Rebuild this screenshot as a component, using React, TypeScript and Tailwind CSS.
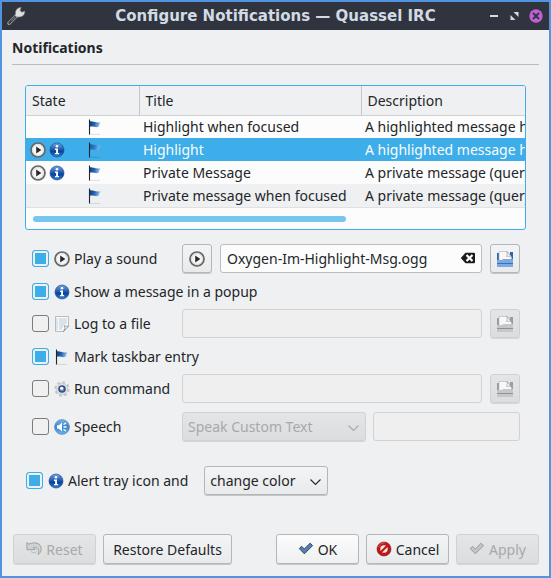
import React, { useState } from "react";
import type { ReactNode } from "react";

function PlayIcon() {
  return (
    <svg className="size-4 shrink-0" viewBox="0 0 16 16" aria-hidden="true">
      <circle cx="8" cy="8" r="7" fill="#f8f8f8" stroke="#666" strokeWidth="1.7" />
      <circle cx="8" cy="8" r="5.4" fill="none" stroke="#d4d4d4" strokeWidth="0.8" />
      <path d="M6.200 4.500 11.400 8 6.200 11.500Z" fill="#2a2a2a" />
    </svg>
  );
}

function InfoIcon() {
  return (
    <svg className="size-4 shrink-0" viewBox="0 0 16 16" aria-hidden="true">
      <defs>
        <linearGradient id="info-fill" x1="0" y1="0" x2="0" y2="1">
          <stop offset="0" stopColor="#7aa3da" />
          <stop offset="0.45" stopColor="#1f5cb2" />
          <stop offset="0.6" stopColor="#0b4199" />
          <stop offset="1" stopColor="#2f86e0" />
        </linearGradient>
      </defs>
      <circle cx="8" cy="8" r="7" fill="url(#info-fill)" stroke="#123f86" strokeWidth="0.6" />
      <circle cx="8" cy="4.3" r="1.3" fill="#fff" />
      <path d="M6 6.600h3v4.300h1.100v1.300H6v-1.300h1.100V7.900H6Z" fill="#fff" />
    </svg>
  );
}

function FlagIcon({ faded = false }: { faded?: boolean }) {
  return (
    <svg className="size-4 shrink-0" viewBox="0 0 16 16" aria-hidden="true">
      <defs>
        <linearGradient id="flag-fill" x1="0" y1="0" x2="1" y2="0.2">
          <stop offset="0" stopColor="#0c3a78" />
          <stop offset="0.5" stopColor="#2565b4" />
          <stop offset="1" stopColor="#9cc4ee" />
        </linearGradient>
      </defs>
      <path d="M3 15.400h10" stroke="#000" strokeOpacity="0.15" strokeWidth="0.8" />
      <path d="M2.500.500v15" stroke="#20262e" strokeWidth="1.100" />
      <path
        d="M3 2.200C6 1.800 7.500 4 13.600 3.200 12.500 5 12.200 5.500 11.800 7.800 8 9 6.500 7 3 7.800Z"
        fill="url(#flag-fill)"
        opacity={faded ? 0.7 : 1}
      />
    </svg>
  );
}

function LogIcon() {
  return (
    <svg className="size-4 shrink-0" viewBox="0 0 16 16" aria-hidden="true">
      <path d="M1.500.500h13v9.500l-5 5.500h-8Z" fill="#fafafa" stroke="#a9adb0" strokeWidth="0.8" />
      <path d="M5 3h8M5 5h8M5 7h8M5 9h6M5 11h4M5 13h3" stroke="#a8c0cf" strokeWidth="0.8" />
      <path d="M3 2.600v11" stroke="#8ea4b2" strokeWidth="1" strokeDasharray="1 1" />
      <path d="M14.500 10c-1.500.500-2.500.200-3.800-.300.300 2-.200 3.800-1.200 5.800Z" fill="#fff" stroke="#858585" strokeWidth="0.8" />
    </svg>
  );
}

function GearIcon() {
  return (
    <svg className="size-4 shrink-0" viewBox="0 0 16 16" aria-hidden="true">
      <circle cx="8" cy="8" r="6.600" fill="none" stroke="#c3c5c7" strokeWidth="2.200" strokeDasharray="2.900 2.280" />
      <circle cx="8" cy="8" r="5.600" fill="#dfe0e2" stroke="#c6c8ca" strokeWidth="0.8" />
      <circle cx="8" cy="8" r="3" fill="#6f8bbd" stroke="#34508a" strokeWidth="1.600" />
      <circle cx="7.600" cy="7.300" r="1.500" fill="#fff" />
    </svg>
  );
}

function SpeechIcon() {
  return (
    <svg className="size-4 shrink-0" viewBox="0 0 16 16" aria-hidden="true">
      <defs>
        <linearGradient id="speech-fill" x1="0" y1="0" x2="0" y2="1">
          <stop offset="0" stopColor="#79b3e6" />
          <stop offset="0.5" stopColor="#3b83cb" />
          <stop offset="1" stopColor="#6fb4ec" />
        </linearGradient>
      </defs>
      <circle cx="8" cy="8" r="7.500" fill="url(#speech-fill)" stroke="#4a8ac8" strokeWidth="0.6" />
      <path d="M3 6.200h2l3-2.800v9.200L5 9.800H3Z" fill="#fff" />
      <path d="M9.500 5.500 12 4.200M9.500 8h3M9.500 10.500 12 11.800" stroke="#fff" strokeWidth="1.300" />
    </svg>
  );
}

function OpenIcon({ disabled = false }: { disabled?: boolean }) {
  const back = disabled ? "#9b9c9d" : "#2f66ab";
  const front = disabled ? "#c6c7c8" : "#7ba9e3";
  const line = disabled ? "#919293" : "#3d70b5";
  return (
    <svg className="size-4 shrink-0" viewBox="0 0 16 16" aria-hidden="true">
      <path d="M0 2h2v7H0ZM13 1h3v9h-3Z" fill={back} />
      <path d="M2 .500h8L14.500 6v4H2Z" fill="#f8f8f8" stroke="#b0b0b0" strokeWidth="0.6" />
      <path d="M10 .500 14.500 6C13 5.200 11.500 5 9.500 5.300 10.300 4 10.400 2.500 10 .500Z" fill="#fff" stroke="#8a8a8a" strokeWidth="0.6" />
      <path d="M0 9h4.500L6.500 8H16v8H0Z" fill={front} />
      <path d="M0 12.500h16" stroke={line} strokeWidth="1" />
    </svg>
  );
}

function CheckIcon({ disabled = false }: { disabled?: boolean }) {
  return (
    <svg className="size-4 shrink-0" viewBox="0 0 16 16" aria-hidden="true">
      <path
        d="M1.300 7.600 3.600 5.300 6.300 8 12.200 2.200 14.600 4.600 6.400 12.800Z"
        fill={disabled ? "#c3c4c5" : "#5580b3"}
        stroke={disabled ? "#98999a" : "#2f4259"}
        strokeWidth="1"
        strokeLinejoin="round"
      />
    </svg>
  );
}

function CancelIcon() {
  return (
    <svg className="size-4 shrink-0" viewBox="0 0 16 16" aria-hidden="true">
      <circle cx="8" cy="8" r="7" fill="#c01818" stroke="#7d1010" strokeWidth="0.6" />
      <circle cx="8" cy="8" r="3.700" fill="#efe9e9" />
      <path d="m4.500 11.500 7-7" stroke="#c01818" strokeWidth="2.200" />
      <path d="M2.500 6C3.500 3 6 1.800 8.500 1.900" fill="none" stroke="#e67070" strokeWidth="0.8" />
    </svg>
  );
}

function UndoIcon() {
  return (
    <svg className="size-4 shrink-0" viewBox="0 0 16 16" aria-hidden="true">
      <path
        d="M.800 1.500 3 3.200C8 .500 15.500 2 15.200 8c0 3-1.700 4.800-3.200 5.400C14 9 11.500 6.200 7.200 6.300l2 2.400H1Z"
        fill="#d0d1d2"
        stroke="#a0a1a3"
        strokeWidth="1"
        strokeLinejoin="round"
      />
      <path d="M5 10.500c2 2 5 1.500 6-.500" fill="none" stroke="#b4b5b7" strokeWidth="1" />
    </svg>
  );
}

function ClearIcon() {
  return (
    <svg className="h-3 w-4" viewBox="0 0 16 12" aria-hidden="true">
      <path d="M.800 6 5.500.800H14a1 1 0 0 1 1 1v8.400a1 1 0 0 1-1 1H5.500Z" fill="#1c1c1c" />
      <path d="m6.500 3 6 6m0-6-6 6" stroke="#fff" strokeWidth="2.200" />
    </svg>
  );
}

function WrenchIcon() {
  return (
    <svg className="h-5 w-5" viewBox="0 0 20 20" aria-hidden="true">
      <path d="M3 17.200 11 9.200" stroke="#9c9b95" strokeWidth="3.600" strokeLinecap="round" />
      <path d="M3.300 16.900 10.500 9.700" stroke="#2f343f" strokeWidth="2" strokeLinecap="round" />
      <path d="M5.500 14.700 9.500 10.700" stroke="#8d8c87" strokeWidth="0.8" />
      <path
        d="M9.500 8.200C9 4 11.500 1.500 15.300 1.500L14 4.300l1.800 2 3-1.300c.4 3.400-2.300 6.300-6.300 6L11 11.200 8.800 9.400Z"
        fill="#dfdfdb"
        stroke="#77776f"
        strokeWidth="0.6"
      />
    </svg>
  );
}

function Chevron() {
  return (
    <svg className="pointer-events-none absolute top-3 right-1.5 h-1.5 w-[11px]" viewBox="0 0 11 6" aria-hidden="true">
      <path d="m.500.500 5 5 5-5" fill="none" stroke="currentColor" strokeWidth="1.100" />
    </svg>
  );
}

function Checkbox({ id, initial }: { id: string; initial: boolean }) {
  const [checked, setChecked] = useState(initial);
  return (
    <input
      id={id}
      type="checkbox"
      checked={checked}
      onChange={(e) => setChecked(e.target.checked)}
      className="size-[17px] shrink-0 appearance-none rounded-[3px] border border-[#7a7c7e] bg-[#f0f0f1] checked:border-[#3daee9] checked:bg-[#3daee9] checked:shadow-[inset_0_0_0_2px_#eff0f1]"
    />
  );
}

function Option({ id, initial, icon, text, className = "" }: { id: string; initial: boolean; icon: ReactNode; text: string; className?: string }) {
  return (
    <div className={`flex items-center gap-[5px] ${className}`}>
      <Checkbox id={id} initial={initial} />
      <label htmlFor={id} className="flex items-center gap-1 whitespace-nowrap">
        {icon}
        {text}
      </label>
    </div>
  );
}

const enabledBox = "border-[#b4b7b9] bg-linear-to-b from-[#f3f4f5] to-[#e9eaeb] shadow-[0_1px_0_#c4c6c8]";
const disabledBox = "border-[#cfd1d3] bg-linear-to-b from-[#e4e5e6] to-[#dcddde] text-[#a7a9ab] shadow-[0_1px_0_#d3d5d7]";
const field = "h-[29px] w-full min-w-0 rounded-[3px] border px-1.5 outline-none";

function SquareButton({ label, disabled = false, children }: { label: string; disabled?: boolean; children: ReactNode }) {
  return (
    <button
      aria-label={label}
      disabled={disabled}
      className={`flex h-[29px] w-[30px] shrink-0 items-center justify-center rounded-[3px] border ${disabled ? disabledBox : enabledBox}`}
    >
      {children}
    </button>
  );
}

function DialogButton({ disabled = false, wide = false, bright = false, icon, children }: { disabled?: boolean; wide?: boolean; bright?: boolean; icon?: ReactNode; children: ReactNode }) {
  const look = disabled
    ? disabledBox
    : bright
      ? "border-[#b4b7b9] bg-linear-to-b from-[#fcfcfc] to-[#eff0f1] shadow-[0_1px_0_#c4c6c8]"
      : enabledBox;
  return (
    <button
      disabled={disabled}
      className={`flex h-[30px] items-center justify-center gap-1 rounded-[3px] border whitespace-nowrap ${wide ? "w-[129px]" : "w-[83px]"} ${look}`}
    >
      {icon}
      {children}
    </button>
  );
}

const rows = [
  { title: "Highlight when focused", text: "A highlighted message has been received", alerts: false },
  { title: "Highlight", text: "A highlighted message has been received", alerts: true },
  { title: "Private Message", text: "A private message (query) has been received", alerts: true },
  { title: "Private message when focused", text: "A private message (query) has been received", alerts: false },
];

function NotificationTable() {
  const [selected, setSelected] = useState(1);
  return (
    <div className="overflow-hidden rounded-[3px] border border-[#3daee9] bg-[#fcfcfc]">
      <div className="overflow-hidden border-b border-[#dfe1e2]">
        <table className="w-[840px] table-fixed border-collapse text-left">
          <thead className="bg-[#eff0f1]">
            <tr className="h-[29px] border-b border-[#d0d2d4]">
              <th className="w-[113px] border-r border-[#c4c6c8] px-1.5 py-0 font-normal">State</th>
              <th className="w-[222px] border-r border-[#c4c6c8] px-1.5 py-0 font-normal">Title</th>
              <th className="px-1.5 py-0 font-normal">Description</th>
            </tr>
          </thead>
          <tbody>
            {rows.map((row, i) => (
              <tr
                key={row.title}
                onClick={() => setSelected(i)}
                className={`h-[23px] ${i === selected ? "bg-[#3daee9] text-[#fcfcfc]" : i === 3 ? "bg-[#eff0f1]" : ""}`}
              >
                <td className="px-1 py-0">
                  <div className="grid grid-cols-[19px_38px_16px] items-center">
                    {row.alerts ? <PlayIcon /> : <span />}
                    {row.alerts ? <InfoIcon /> : <span />}
                    <FlagIcon faded={i === selected} />
                  </div>
                </td>
                <td className="px-1 py-0 whitespace-nowrap">{row.title}</td>
                <td className="px-1 py-0 whitespace-nowrap">{row.text}</td>
              </tr>
            ))}
          </tbody>
        </table>
      </div>
      <div className="px-[7px] pt-2 pb-[7px]">
        <div className="h-1.5 w-[64.5%] rounded-full bg-[#76c6ef]" />
      </div>
    </div>
  );
}

export default function App() {
  const [sound, setSound] = useState("Oxygen-Im-Highlight-Msg.ogg");
  return (
    <div className="flex min-h-screen flex-col border-2 border-[#5294e2] bg-[#eff0f1] font-['Noto_Sans',sans-serif] text-[14px] leading-[19px] text-[#232629]">
      <header className="grid h-7 grid-cols-[60px_1fr_64px] items-center bg-[#2f343f] pl-1 text-[#d3dae3]">
        <WrenchIcon />
        <h1 className="text-center font-['DejaVu_Sans',sans-serif] text-[15px] leading-5 font-bold whitespace-nowrap">
          Configure Notifications — Quassel IRC
        </h1>
        <div className="flex items-center justify-end gap-2.5 pr-1.5">
          <button aria-label="Minimize">
            <svg className="h-2.5 w-2.5" viewBox="0 0 10 10"><path d="M1 4h8v2H1Z" fill="currentColor" /></svg>
          </button>
          <button aria-label="Maximize">
            <svg className="h-2.5 w-2.5" viewBox="0 0 10 10"><path d="M4.500 1H9.500v5ZM1.500 4l5 5h-5Z" fill="currentColor" /></svg>
          </button>
          <button aria-label="Close">
            <svg className="h-3.5 w-3.5" viewBox="0 0 14 14">
              <circle cx="7" cy="7" r="6.700" fill="#c05fd6" />
              <path d="m4 4 6 6m0-6-6 6" stroke="#2f343f" strokeWidth="1.800" />
            </svg>
          </button>
        </div>
      </header>

      <main className="flex flex-1 flex-col px-2.5 pb-3">
        <h2 className="border-b border-[#b9bbbd] pt-2 pb-[7px] font-bold">Notifications</h2>

        <section className="px-[13px] pt-5">
          <NotificationTable />

          <div className="mt-3.5 grid grid-cols-[150px_1fr_30px] grid-rows-[30px_19px_30px_19px_30px_30px] gap-y-2 pr-1.5 pl-[7px]">
            <Option id="sound" initial icon={<PlayIcon />} text="Play a sound" className="h-[29px]" />
            <div className="flex gap-2 pr-2">
              <SquareButton label="Play"><PlayIcon /></SquareButton>
              <div className="relative min-w-0 flex-1">
                <input aria-label="Sound file" value={sound} onChange={(e) => setSound(e.target.value)} className={`${field} border-[#bbbdbf] bg-[#fcfcfc] pr-7`} />
                <button aria-label="Clear" onClick={() => setSound("")} className="absolute top-2 right-1.5"><ClearIcon /></button>
              </div>
            </div>
            <SquareButton label="Choose sound file"><OpenIcon /></SquareButton>

            <Option id="popup" initial icon={<InfoIcon />} text="Show a message in a popup" className="col-span-3" />

            <Option id="log" initial={false} icon={<LogIcon />} text="Log to a file" className="h-[29px]" />
            <div className="pr-2">
              <input aria-label="Log file" disabled className={`${field} border-[#d0d2d4] bg-[#efefef]`} />
            </div>
            <SquareButton label="Choose log file" disabled><OpenIcon disabled /></SquareButton>

            <Option id="taskbar" initial icon={<FlagIcon />} text="Mark taskbar entry" className="col-span-3" />

            <Option id="command" initial={false} icon={<GearIcon />} text="Run command" className="h-[29px]" />
            <div className="pr-2">
              <input aria-label="Command" disabled className={`${field} border-[#d0d2d4] bg-[#efefef]`} />
            </div>
            <SquareButton label="Choose command" disabled><OpenIcon disabled /></SquareButton>

            <Option id="speech" initial={false} icon={<SpeechIcon />} text="Speech" className="h-[29px]" />
            <div className="col-span-2 grid grid-cols-[5fr_4fr] gap-[7px]">
              <div className={`relative h-[29px] rounded-[3px] border ${disabledBox}`}>
                <select aria-label="Speech mode" disabled className="h-full w-full appearance-none px-[5px] opacity-100 outline-none">
                  <option>Speak Custom Text</option>
                </select>
                <Chevron />
              </div>
              <input aria-label="Custom text" disabled className={`${field} border-[#d0d2d4] bg-[#efefef]`} />
            </div>
          </div>

          <div className="mt-6 flex items-center gap-4 pl-px">
            <Option id="tray" initial icon={<InfoIcon />} text="Alert tray icon and" />
            <div className={`relative h-[29px] w-[124px] rounded-[3px] border ${enabledBox}`}>
              <select aria-label="Alert style" className="h-full w-full appearance-none px-[5px] outline-none">
                <option>change color</option>
              </select>
              <Chevron />
            </div>
          </div>
        </section>

        <footer className="mt-auto flex justify-between pl-px">
          <div className="flex gap-[7px]">
            <DialogButton disabled icon={<UndoIcon />}>Reset</DialogButton>
            <DialogButton wide>Restore Defaults</DialogButton>
          </div>
          <div className="flex gap-[7px]">
            <DialogButton bright icon={<CheckIcon />}>OK</DialogButton>
            <DialogButton icon={<CancelIcon />}>Cancel</DialogButton>
            <DialogButton disabled icon={<CheckIcon disabled />}>Apply</DialogButton>
          </div>
        </footer>
      </main>
    </div>
  );
}
